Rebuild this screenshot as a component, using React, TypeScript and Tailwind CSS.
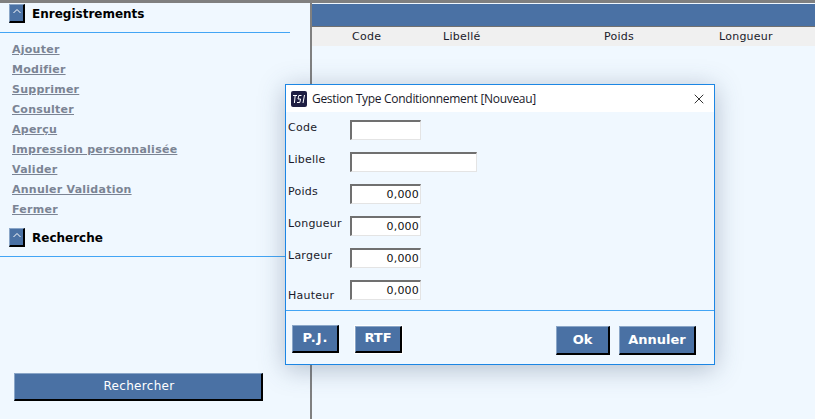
import { X } from "lucide-react";

const links = [
  "Ajouter",
  "Modifier",
  "Supprimer",
  "Consulter",
  "Aperçu",
  "Impression personnalisée",
  "Valider",
  "Annuler Validation",
  "Fermer",
];

const font = "font-['DejaVu_Sans','Liberation_Sans',sans-serif]";

function CollapseIcon() {
  return (
    <div className="w-4 h-[19px] bg-[#4a71a4] border-t border-l border-t-[#8aa6c8] border-l-[#8aa6c8] border-r-2 border-b-2 border-r-black border-b-black flex justify-center pt-[3px]">
      <svg width="10" height="6" viewBox="0 0 10 6" fill="none" stroke="#ffffff" strokeWidth="1">
        <path d="M1.5 5 L5 1.5 L8.5 5" />
      </svg>
    </div>
  );
}

function BlueButton({ label, className }: { label: string; className: string }) {
  return (
    <button
      className={`bg-[#4a71a4] border-t border-l border-t-[#8aa6c8] border-l-[#8aa6c8] border-r-2 border-b-2 border-r-black border-b-black text-white font-bold text-[13px] flex items-center justify-center ${className}`}
    >
      {label}
    </button>
  );
}

function Field({ label, value, wide, labelClass }: { label: string; value?: string; wide?: boolean; labelClass?: string }) {
  return (
    <div className="flex h-[32px]">
      <div className={`w-[62px] text-[11px] leading-[14px] text-[#1a1a2a] tracking-[0.25px] ${labelClass ?? "pt-[1px]"}`}>{label}</div>
      <div
        className={`h-[20px] bg-white border-t-2 border-l-2 border-t-[#707070] border-l-[#707070] border-r border-b border-r-[#e4e4e4] border-b-[#e4e4e4] text-right pr-[1px] text-[11px] tracking-[0.2px] leading-[18px] text-[#111] ${wide ? "w-[127px]" : "w-[71px]"}`}
      >
        {value}
      </div>
    </div>
  );
}

export default function App() {
  return (
    <div className={`relative w-[815px] h-[419px] overflow-hidden bg-[#f0f8ff] ${font}`}>
      <div className="h-[3px] bg-[#808080]" />
      <div className="flex h-[416px]">
        <aside className="w-[310px] shrink-0 flex flex-col">
          <div className="flex items-start pl-[9px] pt-[1px] gap-[7px] h-[29px]">
            <CollapseIcon />
            <span className="font-bold text-[12px] leading-[21px] text-black">Enregistrements</span>
          </div>
          <div className="h-px w-[290px] bg-[#42a5f5] shrink-0" />
          <nav className="flex flex-col pl-3 pt-[7px]">
            {links.map((l) => (
              <a key={l} className="h-5 text-[11px] leading-5 font-bold underline text-[#7b8494] tracking-[0.25px]">
                {l}
              </a>
            ))}
          </nav>
          <div className="flex items-start pl-[9px] pt-[8px] gap-[7px] h-[36px]">
            <CollapseIcon />
            <span className="font-bold text-[12px] leading-[21px] text-black">Recherche</span>
          </div>
          <div className="h-px w-full bg-[#42a5f5] shrink-0" />
          <div className="mt-auto mb-[18px] ml-[14px]">
            <button className="w-[249px] h-[28px] pb-px pl-[2px] bg-[#4a71a4] border-t border-l border-t-[#8aa6c8] border-l-[#8aa6c8] border-r-2 border-b-2 border-r-black border-b-black text-white text-[12px] tracking-[0.3px]">
              Rechercher
            </button>
          </div>
        </aside>
        <main className="flex-1 border-l-2 border-l-[#808080]">
          <div className="h-[23px] mt-px bg-[#4a71a4] border-b border-b-[#707070]" />
          <div className="h-[19px] bg-[#f0f0f0] flex text-[11px] leading-[19px] text-[#1a1a2a] tracking-[0.25px]">
            <span className="w-[108px] pl-[40px]">Code</span>
            <span className="w-[161px] pl-[23px]">Libellé</span>
            <span className="w-[115px] pl-[23px]">Poids</span>
            <span className="pl-[23px]">Longueur</span>
          </div>
        </main>
      </div>

      <div className="absolute left-[285px] top-[84px] w-[430px] h-[281px] border border-[#1c86e4] bg-[#f0f8ff] shadow-[0_4px_24px_rgba(60,80,110,0.35)] flex flex-col">
        <div className="h-[27px] bg-white flex items-center pl-[5px] pr-[7px] shrink-0">
          <div className="w-4 h-4 rounded-[2px] bg-[#1e1e42] flex items-center justify-center mr-[5px]">
            <svg width="14" height="10" viewBox="0 0 14 10" fill="none" stroke="#ffffff" strokeWidth="1">
              <path d="M1 1.5 H5 M3.2 1.5 L2.4 9 M9.5 1.5 H6.8 L6 5 H8.6 L7.8 8.5 H5 M12.5 1 L11 9" />
            </svg>
          </div>
          <span className="text-[12px] text-[#1a1a2a] flex-1 font-['Open_Sans',sans-serif] tracking-[-0.3px]">Gestion Type Conditionnement [Nouveau]</span>
          <X size={16} strokeWidth={1.2} className="text-black" />
        </div>
        <div className="pl-[2px] pt-[8px] h-[199px] shrink-0 border-b border-b-[#42a5f5]">
          <Field label="Code" />
          <Field label="Libelle" wide />
          <Field label="Poids" value="0,000" />
          <Field label="Longueur" value="0,000" />
          <Field label="Largeur" value="0,000" />
          <Field label="Hauteur" value="0,000" labelClass="pt-[9px]" />
        </div>
        <div className="flex items-start pl-[6px] pr-[18px] pt-[14px]">
          <BlueButton label="P.J." className="w-[47px] h-[28px] pb-px pl-[1px] tracking-[1px]" />
          <div className="ml-[15px] border border-white">
            <BlueButton label="RTF" className="w-[47px] h-[27px] pb-[2px]" />
          </div>
          <div className="ml-auto flex gap-[9px] pt-px">
            <BlueButton label="Ok" className="w-[54px] h-[29px]" />
            <BlueButton label="Annuler" className="w-[77px] h-[29px]" />
          </div>
        </div>
      </div>
    </div>
  );
}
